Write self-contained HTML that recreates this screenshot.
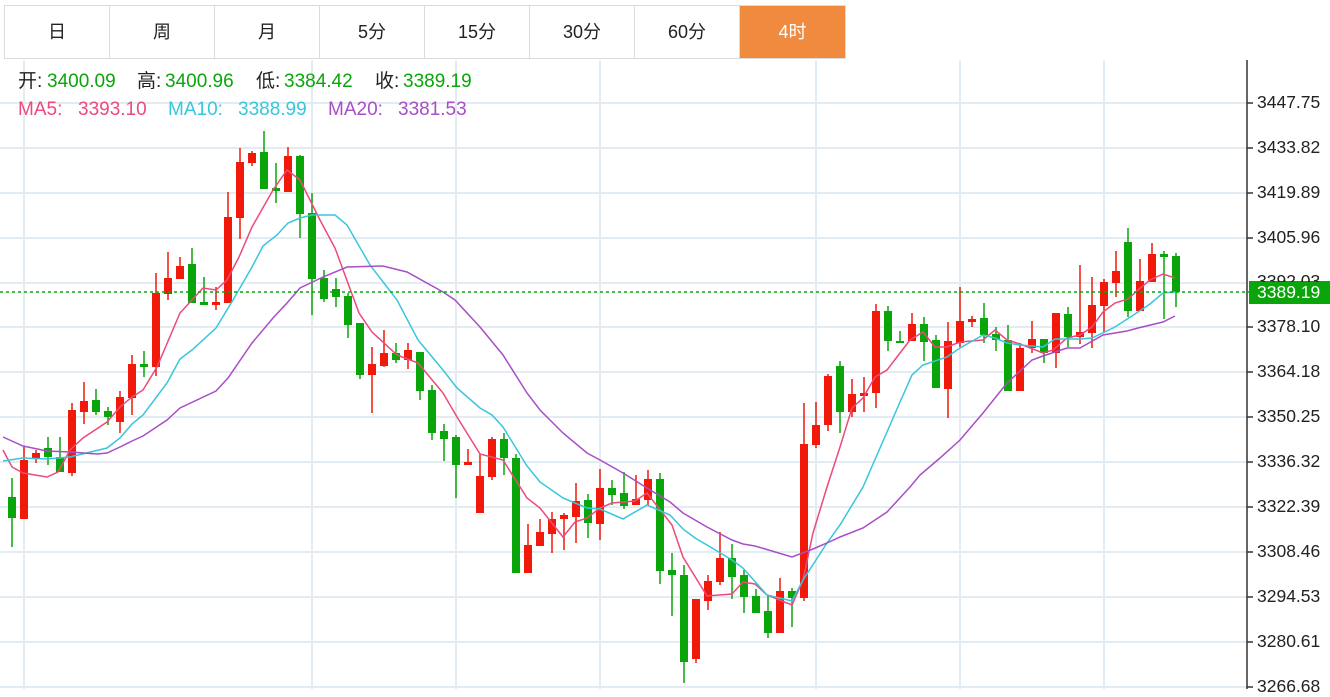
<!DOCTYPE html>
<html><head><meta charset="utf-8"><style>
body{margin:0;width:1330px;height:689px;overflow:hidden;background:#fff;font-family:"Liberation Sans","Noto Sans CJK SC",sans-serif}
.tabs{position:absolute;left:4px;top:5px;height:54px;display:flex;border:1px solid #dcdcdc;box-sizing:border-box}
.tab{width:105px;height:52px;line-height:52px;text-align:center;font-size:18px;color:#222;border-right:1px solid #dcdcdc;box-sizing:border-box}
.tab.on{background:#f08a3e;color:#fff;border-right:none}
.lg{position:absolute;font-size:19px;white-space:pre;line-height:22px}
.g{color:#0aa50a}.k{color:#222}
.ax{position:absolute;left:1257px;font-size:17.5px;color:#222;line-height:21px}
</style></head><body>
<svg width="1330" height="689" style="position:absolute;left:0;top:0">
<g stroke="#e3ecf2" stroke-width="2">
<path d="M0 103H1247M0 148H1247M0 193H1247M0 238H1247M0 283H1247M0 327H1247M0 372H1247M0 417H1247M0 462H1247M0 507H1247M0 552H1247M0 597H1247M0 642H1247M0 687H1247"/>
<path d="M24 60V689M312 60V689M456 60V689M600 60V689M816 60V689M960 60V689M1104 60V689"/>
</g>
<path d="M1247 60V689" stroke="#333" stroke-width="1.5"/>
<g stroke="#333" stroke-width="1.5"><path d="M1247 103h6M1247 148h6M1247 193h6M1247 238h6M1247 327h6M1247 372h6M1247 417h6M1247 462h6M1247 507h6M1247 552h6M1247 597h6M1247 642h6M1247 687h6"/></g>
<g stroke="#f0190a" stroke-width="1.5" fill="#f0190a">
<path d="M24 447V519M36 450V463M72 403V476M84 382V424M120 391V433M132 355V415M156 273V376M168 252V300M180 257V279M216 287V310M228 192V303M240 148V239M252 151V166M288 147V192M372 347V413M384 330V367M408 343V369M468 449V464M480 454V513M492 437V480M528 524V573M540 519V546M552 512V553M564 513V550M576 483V543M600 469V540M636 475V505M648 470V505M696 599V663M708 575V610M720 532V585M780 578V633M804 403V601M816 402V448M828 374V431M852 379V417M864 377V412M876 304V408M912 313V341M948 322V418M960 287V347M972 316V327M1020 343V391M1032 321V353M1056 313V368M1080 265V344M1092 277V348M1104 279V332M1116 251V297M1140 259V311M1152 243V282"/>
<path stroke="none" d="M20 460h8V519h-8ZM32 453h8V459h-8ZM68 410h8V473h-8ZM80 401h8V412h-8ZM116 397h8V422h-8ZM128 364h8V398h-8ZM152 293h8V367h-8ZM164 278h8V294h-8ZM176 266h8V279h-8ZM212 302h8V305h-8ZM224 217h8V303h-8ZM236 162h8V218h-8ZM248 153h8V163h-8ZM284 156h8V192h-8ZM368 364h8V375h-8ZM380 353h8V366h-8ZM404 350h8V360h-8ZM464 462h8V465h-8ZM476 476h8V513h-8ZM488 439h8V477h-8ZM524 545h8V573h-8ZM536 532h8V546h-8ZM548 519h8V534h-8ZM560 515h8V519h-8ZM572 501h8V517h-8ZM596 488h8V524h-8ZM632 499h8V505h-8ZM644 479h8V500h-8ZM692 599h8V659h-8ZM704 581h8V601h-8ZM716 558h8V582h-8ZM776 591h8V633h-8ZM800 444h8V598h-8ZM812 425h8V445h-8ZM824 376h8V425h-8ZM848 394h8V412h-8ZM860 393h8V396h-8ZM872 311h8V393h-8ZM908 324h8V341h-8ZM944 341h8V389h-8ZM956 321h8V343h-8ZM968 319h8V322h-8ZM1016 348h8V391h-8ZM1028 339h8V348h-8ZM1052 313h8V353h-8ZM1076 332h8V337h-8ZM1088 305h8V333h-8ZM1100 282h8V306h-8ZM1112 271h8V283h-8ZM1136 281h8V311h-8ZM1148 254h8V282h-8Z"/>
</g>
<g stroke="#0aa50a" stroke-width="1.5" fill="#0aa50a">
<path d="M12 478V547M48 437V465M60 437V472M96 389V415M108 407V425M144 351V377M192 248V303M204 277V305M264 131V189M276 163V203M300 155V238M312 193V315M324 270V302M336 278V307M348 293V338M360 323V379M396 343V363M420 352V400M432 385V440M444 424V461M456 435V498M504 433V475M516 454V573M588 494V538M612 480V505M624 472V509M660 473V584M672 553V616M684 565V683M732 544V599M744 570V613M756 589V613M768 596V638M792 588V627M840 361V433M888 306V351M900 331V343M924 317V361M936 335V388M984 303V343M996 327V351M1008 325V391M1044 339V363M1068 307V347M1128 228V317M1164 251V319M1176 253V307"/>
<path stroke="none" d="M8 497h8V518h-8ZM44 448h8V457h-8ZM56 457h8V472h-8ZM92 400h8V412h-8ZM104 411h8V417h-8ZM140 364h8V367h-8ZM188 264h8V303h-8ZM200 302h8V305h-8ZM260 152h8V189h-8ZM272 188h8V191h-8ZM296 156h8V214h-8ZM308 213h8V279h-8ZM320 278h8V299h-8ZM332 289h8V297h-8ZM344 296h8V325h-8ZM356 323h8V375h-8ZM392 353h8V360h-8ZM416 352h8V391h-8ZM428 390h8V433h-8ZM440 431h8V439h-8ZM452 437h8V465h-8ZM500 439h8V458h-8ZM512 458h8V573h-8ZM584 500h8V523h-8ZM608 488h8V495h-8ZM620 493h8V506h-8ZM656 479h8V571h-8ZM668 570h8V575h-8ZM680 575h8V662h-8ZM728 558h8V577h-8ZM740 575h8V597h-8ZM752 596h8V613h-8ZM764 611h8V633h-8ZM788 591h8V598h-8ZM836 366h8V412h-8ZM884 311h8V341h-8ZM896 341h8V343h-8ZM920 324h8V342h-8ZM932 340h8V388h-8ZM980 318h8V335h-8ZM992 334h8V340h-8ZM1004 340h8V391h-8ZM1040 339h8V353h-8ZM1064 314h8V337h-8ZM1124 242h8V311h-8ZM1160 254h8V257h-8ZM1172 256h8V292h-8Z"/>
</g>
<g fill="none" stroke-width="1.5">
<polyline stroke="#ec4a7c" points="3,450 12,467 23,473 47,477 58,472 70,450 83,438 107,422 120,407 132,397 143,390 157,367 180,313 203,288 216,290 227,280 239,257 252,227 273,190 287,170 300,180 320,220 335,248 359,313 372,332 397,355 418,363 443,393 457,417 480,454 503,460 527,498 540,508 563,537 575,522 587,518 600,508 612,503 635,501 647,493 672,525 683,557 707,596 732,594 743,582 755,584 767,595 792,605 803,580 813,533 827,487 840,447 852,408 863,398 875,377 887,370 910,340 923,332 935,347 947,347 960,342 983,340 995,330 1007,340 1020,344 1043,353 1053,350 1067,338 1080,335 1092,327 1103,312 1115,303 1128,299 1138,290 1150,280 1163,274 1175,278"/>
<polyline stroke="#38c6dc" points="3,461 23,458 47,459 70,457 107,448 120,438 132,424 143,415 167,383 180,359 192,350 216,328 233,300 252,267 263,246 277,235 288,223 300,218 312,215 335,215 347,225 370,265 397,300 418,340 443,370 457,388 480,408 492,415 503,427 527,466 540,482 563,498 587,508 600,509 623,519 647,505 670,515 683,529 695,538 707,545 732,560 743,568 767,595 792,601 803,580 827,543 840,525 863,487 887,432 900,402 912,375 923,365 947,357 960,348 983,335 995,338 1007,343 1020,345 1043,347 1055,339 1080,339 1092,338 1115,327 1138,312 1150,304 1163,293 1175,292"/>
<polyline stroke="#a84ec6" points="3,437 23,446 47,451 70,452 97,454 107,453 120,447 132,441 143,436 167,420 180,408 216,391 228,378 252,343 273,318 287,303 300,288 323,277 347,267 383,266 407,272 443,292 455,300 480,327 503,355 527,393 540,410 563,433 587,453 600,460 623,473 647,488 670,502 683,513 707,527 732,540 743,544 755,546 792,557 813,549 827,543 840,537 863,528 887,512 910,487 920,475 940,458 960,440 983,413 1007,383 1032,360 1043,356 1067,348 1080,348 1103,335 1127,331 1138,328 1163,322 1175,316"/>
</g>
<path d="M0 292H1249" stroke="#0aa50a" stroke-width="1.5" stroke-dasharray="3,3"/>
<rect x="1249" y="281" width="81" height="23" fill="#0aa50a"/>
</svg>
<div class="tabs"><div class="tab">日</div><div class="tab">周</div><div class="tab">月</div><div class="tab">5分</div><div class="tab">15分</div><div class="tab">30分</div><div class="tab">60分</div><div class="tab on">4时</div></div>
<div class="lg k" style="top:71px;left:18px">开:</div><div class="lg g" style="top:71px;left:47px">3400.09</div>
<div class="lg k" style="top:71px;left:137px">高:</div><div class="lg g" style="top:71px;left:165px">3400.96</div>
<div class="lg k" style="top:71px;left:256px">低:</div><div class="lg g" style="top:71px;left:284px">3384.42</div>
<div class="lg k" style="top:71px;left:375px">收:</div><div class="lg g" style="top:71px;left:403px">3389.19</div>
<div class="lg" style="top:99px;left:18px;color:#ec4a7c">MA5:</div><div class="lg" style="top:99px;left:78px;color:#ec4a7c">3393.10</div>
<div class="lg" style="top:99px;left:168px;color:#38c6dc">MA10:</div><div class="lg" style="top:99px;left:238px;color:#38c6dc">3388.99</div>
<div class="lg" style="top:99px;left:328px;color:#a84ec6">MA20:</div><div class="lg" style="top:99px;left:398px;color:#a84ec6">3381.53</div>
<div class="ax" style="top:92px">3447.75</div>
<div class="ax" style="top:137px">3433.82</div>
<div class="ax" style="top:182px">3419.89</div>
<div class="ax" style="top:227px">3405.96</div>
<div class="ax" style="top:271px;clip-path:inset(0 0 10px 0)">3392.03</div>
<div class="ax" style="top:282px;color:#fff">3389.19</div>
<div class="ax" style="top:316px">3378.10</div>
<div class="ax" style="top:361px">3364.18</div>
<div class="ax" style="top:406px">3350.25</div>
<div class="ax" style="top:451px">3336.32</div>
<div class="ax" style="top:496px">3322.39</div>
<div class="ax" style="top:541px">3308.46</div>
<div class="ax" style="top:586px">3294.53</div>
<div class="ax" style="top:631px">3280.61</div>
<div class="ax" style="top:676px">3266.68</div>
</body></html>
